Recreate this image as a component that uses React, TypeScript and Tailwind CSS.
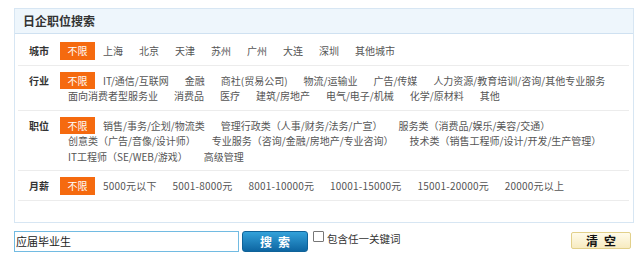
const rows: { label: string; items: string[] }[] = [
	{
		label: "城市",
		items: ["上海", "北京", "天津", "苏州", "广州", "大连", "深圳", "其他城市"],
	},
	{
		label: "行业",
		items: [
			"IT/通信/互联网",
			"金融",
			"商社(贸易公司)",
			"物流/运输业",
			"广告/传媒",
			"人力资源/教育培训/咨询/其他专业服务",
			"面向消费者型服务业",
			"消费品",
			"医疗",
			"建筑/房地产",
			"电气/电子/机械",
			"化学/原材料",
			"其他",
		],
	},
	{
		label: "职位",
		items: [
			"销售/事务/企划/物流类",
			"管理行政类（人事/财务/法务/广宣）",
			"服务类（消费品/娱乐/美容/交通）",
			"创意类（广告/音像/设计师）",
			"专业服务（咨询/金融/房地产/专业咨询）",
			"技术类（销售工程师/设计/开发/生产管理）",
			"IT工程师（SE/WEB/游戏）",
			"高级管理",
		],
	},
	{
		label: "月薪",
		items: [
			"5000元以下",
			"5001-8000元",
			"8001-10000元",
			"10001-15000元",
			"15001-20000元",
			"20000元以上",
		],
	},
];

export default function App() {
	return (
		<div className="pl-[14px] pt-[8px] w-[640px] h-[269px] bg-white font-['Noto_Sans_CJK_SC','Noto_Sans',sans-serif]">
			<div className="w-[620px] border border-[#d7e6f3] pb-[21px]">
				<div className="h-[25px] bg-[#eef6fc] border-b border-[#cfe1f1] pl-[8px] text-[12px] leading-[24px] font-bold text-[#333]">
					日企职位搜索
				</div>
				{rows.map((row, i) => (
					<div
						key={row.label}
						className={
							"flex ml-[3px] mr-[4px] pt-[7px] pb-[6px] border-b border-[#ececec] " +
							(i === 0 ? "mt-[2px]" : "")
						}
					>
						<div className="w-[42px] shrink-0 pl-[11px] text-[10px] leading-[15.5px] font-bold text-[#333]">
							{row.label}
						</div>
						<div
							className={
								"flex flex-wrap flex-1 text-[10px] leading-[15.5px] text-[#555] " +
								(row.label === "月薪" ? "tracking-[0.2px]" : "")
							}
						>
							<span className="bg-[#f56a0f] text-white px-[7.5px] py-[1px] -my-[1px] tracking-normal">
								不限
							</span>
							{row.items.map((item) => (
								<span key={item} className="px-[8px] whitespace-nowrap">
									{item}
								</span>
							))}
						</div>
					</div>
				))}
			</div>
			<div className="flex items-start mt-[8px]">
				<input
					className="w-[225px] h-[21px] border border-[#72bbe2] px-[1px] text-[11px] text-[#222] outline-none"
					defaultValue="应届毕业生"
				/>
				<button className="ml-[3px] w-[66px] h-[21px] rounded-[3px] border border-[#0f6399] bg-gradient-to-b from-[#33a2da] to-[#0d66a2] text-white text-[12px] font-bold tracking-[6px] pl-[6px] leading-[19px]">
					搜索
				</button>
				<label className="flex items-center ml-[5px] text-[10.5px] text-[#333] leading-[13px]">
					<span className="w-[11px] h-[11px] border border-[#777] bg-white rounded-[1px] -mt-[2px]" />
					<span className="ml-[3px] mt-[1px]">包含任一关键词</span>
				</label>
				<div className="flex-1" />
				<button className="mt-[1px] mr-[9px] w-[60px] h-[17px] rounded-[2px] border border-[#e2d08a] bg-gradient-to-b from-[#fffbea] to-[#f7ebc0] text-[12px] font-bold text-[#111] tracking-[6px] pl-[6px] leading-[15px]">
					清空
				</button>
			</div>
		</div>
	);
}
